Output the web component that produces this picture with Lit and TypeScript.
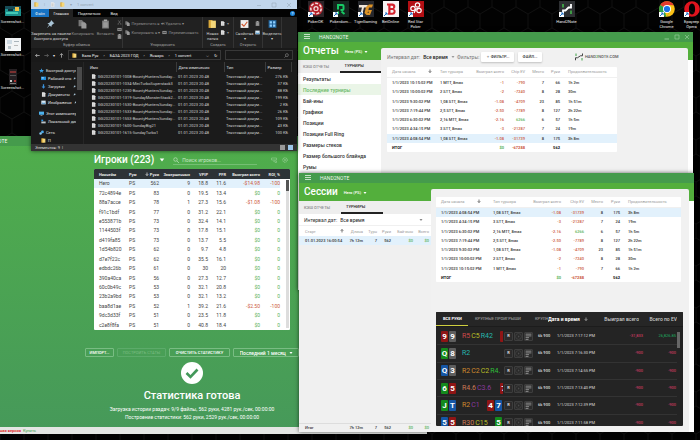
import { LitElement, html, css, svg, nothing, TemplateResult } from "lit";
import { customElement } from "lit/decorators.js";
import { classMap } from "lit/directives/class-map.js";

type Column = { label: string; width?: number; align?: "r" | "l"; sort?: "up" | "down" };

const arrow = (dir: "up" | "down") => html`<svg class="sort" viewBox="0 0 8 8" aria-hidden="true">
  <path d=${dir === "down" ? "M4 1v6M1.5 4.5L4 7l2.5-2.5" : "M4 7V1M1.5 3.5L4 1l2.5 2.5"} fill="none" stroke="currentColor" stroke-width="1.3" /></svg>`;

const tone = (value: string, index: number, money: number[]) => {
  if (!money.includes(index)) return "";
  return value.startsWith("-") ? "neg" : "pos";
};

function dataTable(name: string, cols: Column[], rows: string[][], money: number[], active = -1, total?: string[]): TemplateResult {
  const side = (i: number) => (cols[i].align === "r" ? "r" : "l");
  return html`<table class=${name}>
    <colgroup>${cols.map((c) => html`<col style=${c.width ? `width:${c.width}px` : ""} />`)}</colgroup>
    <thead><tr>${cols.map((c, i) => html`<th scope="col" class="${side(i)} ${c.sort ? "sorted" : ""}">${c.label}${c.sort ? arrow(c.sort) : nothing}</th>`)}</tr></thead>
    <tbody>${rows.map((r, n) => html`<tr class=${classMap({ active: n === active })}>
      ${r.map((v, i) => html`<td class="${side(i)} ${tone(v, i, money)}">${v}</td>`)}</tr>`)}</tbody>
    ${total ? html`<tfoot><tr>${total.map((v, i) => html`<td class="${side(i)} ${v ? tone(v, i, money) : ""}">${v}</td>`)}</tr></tfoot>` : nothing}
  </table>`;
}

const players = [
  ["Hero", "PS", "562", "9", "18.8", "11.6", "-$14.98", "-100"],
  ["72c4894e", "PS", "83", "0", "19.5", "13.4", "$0", "0"],
  ["88a7acce", "PS", "78", "1", "27.3", "15.6", "-$1.08", "-100"],
  ["f91c1bdf", "PS", "77", "0", "31.2", "22.1", "$0", "0"],
  ["e553871b", "PS", "73", "0", "32.4", "14.1", "$0", "0"],
  ["1144503f", "PS", "73", "0", "17.8", "15.1", "$0", "0"],
  ["d419fa85", "PS", "73", "0", "13.7", "5.5", "$0", "0"],
  ["1d54b820", "PS", "62", "0", "9.7", "4.8", "$0", "0"],
  ["d7e7f22c", "PS", "62", "0", "35.5", "16.1", "$0", "0"],
  ["edbdc26b", "PS", "61", "0", "30", "20", "$0", "0"],
  ["390a40ca", "PS", "56", "0", "27.3", "12.7", "$0", "0"],
  ["60c0b49c", "PS", "53", "0", "32.1", "20.8", "$0", "0"],
  ["23b2a9bd", "PS", "53", "0", "32.1", "13.2", "$0", "0"],
  ["baa8d1ae", "PS", "52", "1", "39.2", "21.6", "-$2.50", "-100"],
  ["9dc3d33f", "PS", "51", "0", "23.5", "11.8", "$0", "0"],
  ["c2e8f8fa", "PS", "51", "0", "40.8", "18.4", "$0", "0"],
];

const tournaments = [
  ["1/1/2023 10:15:02 PM", "1 MTT, 8max", "-1", "-790", "7", "66", "1h 2m"],
  ["1/1/2023 10:00:02 PM", "2 STT, 8max", "-2", "-7240", "8", "28", "30m"],
  ["1/1/2023 9:30:02 PM", "1,08 STT, 8max", "-1.08", "-4709", "23", "85", "1h 51m"],
  ["1/1/2023 7:19:44 PM", "2,5 STT, 8max", "-2.50", "-7789", "8", "127", "2h 22m"],
  ["1/1/2023 6:30:02 PM", "2,16 MTT, 8max", "-2.16", "6266", "6", "57", "1h 5m"],
  ["1/1/2023 4:34:15 PM", "3 STT, 8max", "-3", "-21287", "7", "24", "19m"],
  ["1/1/2023 4:08:54 PM", "1,08 STT, 8max", "-1.08", "-31739", "8", "175", "3h 8m"],
];
const tournamentTotal = ["ИТОГ", "", "$0", "-67288", "", "562", ""];

const tournamentCols = (w: number[]): Column[] => [
  { label: "Дата начала", width: w[0], sort: "down" },
  { label: "Тип турнира", width: w[1] },
  { label: "Выиграл всего", width: w[2], align: "r" },
  { label: "Chip EV", width: w[3], align: "r" },
  { label: "Место", width: w[4], align: "r" },
  { label: "Руки", width: w[5], align: "r" },
  { label: "Продолжительность" },
];

const files: [string, string][] = [
  ["GG20230101-1008-BountyHuntersSunday...", "276 КБ"],
  ["GG20230101-1034-MiniTurboSuperstack3", "37 КБ"],
  ["GG20230101-1230-BountyHuntersSunday...", "88 КБ"],
  ["GG20230101-1319-SundayMonsterStack2...", "199 КБ"],
  ["GG20230101-1530-BountyHuntersSunday...", "2 КБ"],
  ["GG20230101-1533-BountyHuntersSunday...", "26 КБ"],
  ["GG20230101-1553-BountyHuntersSunday...", "109 КБ"],
  ["GG20230101-1600-SundayBig21", "43 КБ"],
  ["GG20230101-1615-SundayTurbo1", "100 КБ"],
];

type Card = [string, "r" | "k" | "g" | "b"];
type Hand = { hole: Card[]; line: [string, string][]; board?: Card[]; clip?: boolean; at: string; won: string; ev: string };
const hands: Hand[] = [
  { hole: [["9", "r"], ["9", "k"]], line: [["R5", "c1"], ["C5", "c2"], ["R42", "c3"]], board: [["", "r"]], clip: true, at: "1/1/2023 7:17:12 PM", won: "-31,833", ev: "26,826.85" },
  { hole: [["Q", "g"], ["8", "k"]], line: [["R2", "c3"]], at: "1/1/2023 7:16:30 PM", won: "-900", ev: "-900" },
  { hole: [["Q", "b"], ["3", "k"]], line: [["R2", "c4"], ["C2", "c4"], ["C2", "c2"], ["R4.", "c5"]], at: "1/1/2023 7:14:55 PM", won: "-900", ev: "-900" },
  { hole: [["6", "g"], ["5", "r"]], line: [["R4.6", "c6"], ["C3.6", "c7"]], board: [["7", "r"]], clip: true, at: "1/1/2023 7:13:40 PM", won: "-900", ev: "-900" },
  { hole: [["J", "g"], ["T", "b"]], line: [["R2", "c4"], ["C1", "c7"]], board: [["4", "r"], ["7", "b"]], at: "1/1/2023 7:12:39 PM", won: "-900", ev: "-900" },
  { hole: [["5", "b"], ["5", "r"]], line: [["R30", "c6"], ["C15", "c2"]], board: [["5", "g"]], at: "1/1/2023 7:11:58 PM", won: "-900", ev: "-900" },
];

const shortcut = svg`<path d="M0 11h5v5H0z" fill="#fff"/><path d="M1 15l3-3M2 12h2v2" stroke="#1d6fc4" stroke-width="1" fill="none"/>`;
const logos: Record<string, TemplateResult> = {
  ok: svg`<rect width="16" height="16" fill="#2b2327"/><circle cx="8" cy="7.500" r="7" fill="#b5222b"/><circle cx="8" cy="7.500" r="5.200" fill="none" stroke="#f3dcdc" stroke-width="1.600" stroke-dasharray="3 1.600"/><circle cx="8" cy="7.500" r="2.600" fill="#f3dcdc"/><path d="M8 5.800L9.600 8 8 9.400 6.400 8z" fill="#a81c25"/>`,
  dom: svg`<rect width="16" height="16" fill="#15271f"/><path d="M5 8.500V4h4.500a1 1 0 011 1v3a1 1 0 01-1 1H7.500" fill="none" stroke="#17c964" stroke-width="2"/><path d="M5 10.500V13M8.500 10.500l3 2.500" stroke="#17c964" stroke-width="2"/>`,
  tiger: svg`<rect width="16" height="16" fill="#26272c"/><path d="M1 4h9L8.500 6.500H6L4 14H2l2-7.500H1z" fill="#f0e7da"/><path d="M15 3.500h-4L8 6l-1.500 6 2 2H12l2-5h-3.500l-.6 1.800h1l-.5 1.200H9.600L11 6.500h3z" fill="#dc9327"/>`,
  bet: svg`<rect width="16" height="16" fill="#f7f3f3"/><path fill-rule="evenodd" d="M4 2.500h5.500a3 3 0 011.700 5.400 3.200 3.200 0 01-1.700 5.900H4v-2h1.300V4.500H4zM7.500 4.700v2.400H9a1.200 1.200 0 000-2.400zm0 4.300v2.700H9.300a1.350 1.350 0 000-2.700z" fill="#d5232e"/>`,
  star: svg`<rect width="16" height="16" fill="#b30f14"/><circle cx="9.500" cy="4" r="2.200" fill="none" stroke="#fff" stroke-width="1.200"/><circle cx="5" cy="7.500" r="2.200" fill="none" stroke="#fff" stroke-width="1.200"/><circle cx="11" cy="9.500" r="2.200" fill="none" stroke="#fff" stroke-width="1.200"/><path d="M6 12l2-4 4-1" stroke="#fff" stroke-width="1.200" fill="none"/>`,
  h2n: svg`<rect width="16" height="16" fill="#2e3033"/><path d="M4 13V9.500h2.500L9.500 6.500H12V3" fill="none" stroke="#fff" stroke-width="1.800"/><path d="M4 3v3.500M12 9.500V13" stroke="#41a747" stroke-width="1.800"/>`,
  chrome: svg`<circle cx="8" cy="8" r="7.800" fill="#fbc116"/><path d="M8 8L1.200 4.100A7.800 7.800 0 0114.800 4.200L8 4.200z" fill="#e33b2e"/><path d="M8 8L1.200 4.100A7.800 7.800 0 007.500 15.800L11.300 9.900z" fill="#2ba24c"/><path d="M8 4.200h6.800A7.800 7.800 0 007.500 15.800L11.300 9.900z" fill="#fbc116"/><circle cx="8" cy="8" r="4" fill="#fff"/><circle cx="8" cy="8" r="3.100" fill="#1a73e8"/>`,
  opera: svg`<path fill-rule="evenodd" d="M8 .2a7.800 7.800 0 100 15.600A7.800 7.800 0 008 .2zm0 2.300c1.900 0 3.100 2.400 3.100 5.500S9.900 13.500 8 13.500 4.900 11.100 4.900 8 6.100 2.500 8 2.500z" fill="#e0141e"/>`,
  shotA: svg`<rect y="3" width="16" height="10" fill="#1c8f8c"/><rect y="3" width="16" height="3" fill="#174b57"/><rect x="10" y="4" width="4" height="4" fill="#f0c04a"/><rect x="1" y="9" width="12" height="2" fill="#43c9b5"/><rect x="3" y="6" width="5" height="2" fill="#0d3038"/>`,
  shotB: svg`<rect y="2" width="16" height="13" fill="#f2f4f6"/><rect x="2" y="4" width="5" height="4" fill="#cfdbe4"/><rect x="9" y="5" width="5" height="1" fill="#aab4bb"/><rect x="3" y="10" width="3" height="3" fill="#b7c3ca"/><rect x="9" y="9" width="4" height="1" fill="#bbb"/>`,
  shotC: svg`<rect x="4" width="8" height="16" fill="#241f22"/><rect x="5" y="2" width="6" height="2" fill="#7a3030"/><rect x="5" y="6" width="6" height="1" fill="#555"/><rect x="5" y="11" width="2" height="2" fill="#c9c9c9"/><rect x="9" y="11" width="2" height="2" fill="#a33"/><rect x="5" y="14" width="6" height="1" fill="#777"/>`,
};

const deskIcon = (logo: string, label: string, link = true) => html`<button class="desk-icon">
  <svg viewBox="0 0 16 16" aria-hidden="true">${logos[logo]}${link ? shortcut : nothing}</svg><span>${label}</span></button>`;

const caret = html`<svg class="caret" viewBox="0 0 8 8" aria-hidden="true"><path d="M1 2h6L4 6z" fill="currentColor" /></svg>`;
const wave = html`<svg class="wave" viewBox="0 0 16 16" aria-hidden="true"><path d="M1 14.500V9.500h4l6-4h4V1" fill="none" stroke="#444" stroke-width="2" /><path d="M2 1v5M14 10v5" stroke="#3fa046" stroke-width="2" /></svg>`;

const ribbonIcons: Record<string, TemplateResult> = {
  pin: svg`<path d="M9 1l6 6-2 .5-3 3-.5 3-3-3-5 5 4-6-3-3 3-.5 3-3z" fill="#a9c4d6"/>`,
  copy: svg`<path d="M1 1h6l3 3v8H1z" fill="#777"/><path d="M6 5h6l3 3v8H6z" fill="#999"/>`,
  paste: svg`<path d="M2 2h12v14H2z" fill="#7d7d7d"/><path d="M4 5h8v9H4z" fill="#999"/><path d="M5 0h6v3H5z" fill="#aaa"/>`,
  cut: svg`<path d="M4 1l7 10M12 1L5 11" stroke="#8a8a8a" stroke-width="1.500"/><circle cx="4" cy="13" r="2" fill="none" stroke="#8a8a8a"/><circle cx="12" cy="13" r="2" fill="none" stroke="#8a8a8a"/>`,
  path: svg`<path d="M1 3h14v10H1z" fill="#8a8a8a"/><path d="M3 8h10" stroke="#333" stroke-width="2"/>`,
  folder: svg`<path d="M1 1h7v14H1z" fill="#d9a83a"/><path d="M5 2h9v13H5z" fill="#f5d77a"/>`,
  props: svg`<path d="M1 1h14v14H1z" fill="#eee"/><path d="M3 8l4 4 6-8" stroke="#d0552b" stroke-width="2" fill="none"/>`,
  select: svg`<path d="M1 1h14v14H1z" fill="#1f5f96"/><path d="M3 3h4v4H3zM9 3h4v4H9zM3 9h4v4H3zM9 9h4v4H9z" fill="#8fd0ff"/>`,
  page: svg`<path d="M3 1h8l3 3v11H3z" fill="#e8e8e8"/><path d="M5 6h6M5 9h6M5 12h6" stroke="#999"/>`,
  star: svg`<path d="M8 1l2 5 6 .5-4.500 3.500L13 15l-5-3-5 3 1.500-5L0 6.500 6 6z" fill="#3ba0e8"/>`,
  desk: svg`<path d="M0 2h16v11H0z" fill="#1f8ee0"/><path d="M2 4h7v4H2z" fill="#9ad4ff"/>`,
  down: svg`<path d="M6 1h4v7h4l-6 7-6-7h4z" fill="#3b93dc"/>`,
  pic: svg`<path d="M1 2h14v12H1z" fill="#d6e8f5"/><path d="M2 12l4-5 3 3 2-2 4 4z" fill="#3e8bc4"/>`,
  pc: svg`<path d="M0 2h16v10H0z" fill="#4db2ec"/><path d="M5 13h6v2H5z" fill="#bbb"/>`,
  disk: svg`<path d="M1 8h14v6H1z" fill="#bcc4ca"/><path d="M1 2h6v5H1z" fill="#2f9be6"/>`,
  net: svg`<circle cx="11" cy="6" r="4.500" fill="#4aa9ea"/><circle cx="5" cy="11" r="4" fill="#85c8f2"/>`,
  back: svg`<path d="M15 8H2M7 3L2 8l5 5" fill="none" stroke="#ddd" stroke-width="2"/>`,
  fwd: svg`<path d="M1 8h13M9 3l5 5-5 5" fill="none" stroke="#777" stroke-width="2"/>`,
  up: svg`<path d="M8 15V2M3 7l5-5 5 5" fill="none" stroke="#ddd" stroke-width="2"/>`,
};
const glyph = (name: string, size = "") => html`<svg class="glyph ${size}" viewBox="0 0 16 16" aria-hidden="true">${ribbonIcons[name]}</svg>`;

@customElement("app-root")
export class AppRoot extends LitElement {
  static styles = css`
    :host { display: block; font-family: Roboto, "Liberation Sans", sans-serif; font-size: 5px; line-height: 6px; color: #333; }
    * { box-sizing: border-box; }
    button, input, select { font: inherit; color: inherit; background: none; border: 0; padding: 0; margin: 0; appearance: none; text-align: left; outline: 0; border-radius: 0; }
    h1, h2, p, ul { margin: 0; padding: 0; font-weight: 400; list-style: none; }
    a { color: inherit; text-decoration: none; }
    table { border-collapse: collapse; table-layout: fixed; width: 100%; }
    th, td { padding: 0; white-space: nowrap; font-weight: 400; vertical-align: middle; text-align: left; line-height: 5px; }
    .r { text-align: right; }
    .sort { width: 4px; height: 4px; color: #333; }
    .caret { width: 4px; height: 4px; flex: none; }
    .neg { color: #cc5a3c; }
    .pos { color: #5cb35a; }
    .desktop { position: relative; min-height: 100vh; overflow: hidden; background: #020202; }
    .wallpaper { position: absolute; width: 100%; height: 100%; }
    .icons { position: absolute; display: flex; top: 1px; }
    .icons.main { left: 303px; }
    .icons.note { left: 554px; }
    .icons.web { left: 654px; }
    .icons.shots { left: 0; top: 3px; flex-direction: column; gap: 9px; }
    .desk-icon { width: 25px; height: 24px; display: flex; flex-direction: column; align-items: center; gap: 2px; color: #eee; font-size: 4px; line-height: 5px; }
    .shots .desk-icon { gap: 0; }
    .desk-icon svg { width: 16px; height: 16px; flex: none; }
    .desk-icon span { text-align: center; }
    .win { position: absolute; display: flex; flex-direction: column; overflow: hidden; box-shadow: 0 0 4px rgba(0, 0, 0, 0.6); }
    .titlebar { flex: none; height: 10px; display: flex; align-items: center; gap: 9px; padding: 0 3px 0 6px; background: #459b4c; color: #eef8ee; }
    .titlebar svg { width: 6px; height: 6px; }
    .titlebar .controls { margin-left: auto; display: flex; gap: 4px; color: #8fc893; }
    .titlebar .controls svg { display: block; }

    /* players */
    .players { left: -43px; top: 136px; width: 470px; height: 298px; background: linear-gradient(#50ae4b, #46995a); }
    .players main { flex: 1; display: flex; flex-direction: column; align-items: center; color: #fff; padding-top: 7px; }
    .search { width: 196px; height: 16px; display: flex; align-items: center; padding-bottom: 2px; }
    .search h1 { font-size: 10px; line-height: 12px; font-weight: 500; margin-right: 5px; white-space: nowrap; }
    .search label { margin-left: 8px; width: 84px; height: 9px; display: flex; align-items: center; gap: 3px; border-bottom: 1px solid #74be73; color: #b9dfb8; }
    .search input { flex: 1; min-width: 0; }
    .search input::placeholder { color: #c7e6c6; opacity: 1; }
    .search svg { width: 6px; height: 6px; flex: none; }
    .search .tools { margin-left: auto; display: flex; gap: 5px; padding-right: 2px; color: #a3d5a0; }
    .list { width: 196px; background: #fff; color: #444; border-radius: 1px; position: relative; overflow: hidden; }
    .ptable { height: 161px; }
    .ptable thead tr { height: 10px; background: #2d3337; color: #e6e6e6; font-size: 4px; }
    .ptable th { font-weight: 700; }
    .ptable th .sort { color: #fff; margin-right: 1px; }
    .ptable th.sorted.r { display: flex; flex-direction: row-reverse; align-items: center; justify-content: flex-start; height: 10px; }
    .ptable th:first-child, .ptable td:first-child { padding-left: 5px; }
    .ptable .active, .ctable .active, .stable .active { background: #e2f1fc; }
    .thumb { position: absolute; right: 1px; top: 11px; width: 3px; height: 148px; background: #ddd; }
    .thumb i { display: block; height: 11px; background: #555; }
    .actions { margin-top: 18px; display: flex; gap: 3px; font-size: 4px; height: 9px; }
    .actions button, .actions .pick { border: 1px solid #79bd83; border-radius: 1px; display: flex; align-items: center; justify-content: center; }
    .actions button { width: 29px; font-weight: 500; }
    .actions .build { width: 49px; color: #7dbd84; border-color: #5cab6a; font-weight: 400; }
    .actions .clear { width: 61px; }
    .actions .pick { width: 66px; font-size: 5px; font-weight: 500; gap: 2px; }
    .check { width: 22px; height: 22px; margin-top: 5px; flex: none; }
    .players h2 { font-size: 11px; line-height: 12px; font-weight: 500; margin-top: 6px; }
    .players p { line-height: 6px; margin-top: 4px; }
    .players p + p { margin-top: 2px; }
    .players footer { height: 7px; background: #e4e6e4; display: flex; align-items: center; gap: 2px; padding-left: 43px; font-size: 4px; color: #e03030; font-weight: 700; }
    .players footer a { color: #43a047; font-weight: 400; }

    /* explorer */
    .explorer { left: 31px; top: 0; width: 266px; height: 151px; background: #1b1b1b; color: #e2e2e2; font-size: 4px; line-height: 5px; }
    .glyph { width: 5px; height: 5px; flex: none; }
    .glyph.big { width: 9px; height: 10px; }
    .glyph.tiny { width: 3px; height: 3px; }
    .ex-title { height: 9px; background: #c0d5ec; color: #93a2b2; display: flex; align-items: center; gap: 5px; padding: 0 5px 0 3px; }
    .ex-title .controls { margin-left: auto; display: flex; gap: 9px; }
    .ex-title .controls svg { width: 6px; height: 6px; display: block; }
    .ex-tabs { height: 8px; background: #030303; display: flex; align-items: center; }
    .ex-tabs button { height: 8px; text-align: center; padding: 0 5px; color: #eee; }
    .ex-tabs .file { background: #1673c4; width: 18px; padding: 0; }
    .ex-tabs .on { background: #222; width: 24px; padding: 0; }
    .ex-tabs .help { margin-left: auto; margin-right: 2px; width: 5px; height: 5px; border-radius: 50%; background: #1c86dc; padding: 0; color: #fff; line-height: 5px; }
    .ribbon { height: 31px; background: #212121; display: flex; }
    .group { display: flex; flex-direction: column; border-right: 1px solid #343434; padding-top: 2px; }
    .group .row { flex: 1; display: flex; justify-content: center; gap: 2px; }
    .group small { font-size: 4px; line-height: 6px; color: #a5a5a5; text-align: center; }
    .group button { display: flex; flex-direction: column; align-items: center; text-align: center; gap: 2px; line-height: 5px; color: #d0d0d0; white-space: nowrap; }
    .group .mini { flex-direction: row; height: 9px; gap: 2px; color: #8f8f8f; }
    .clip { width: 92px; }
    .clip .row { gap: 1px; }
    .clip button { width: 22px; color: #8f8f8f; }
    .clip button:first-child { width: 40px; color: #ddd; }
    .clip .cut { display: flex; flex-direction: column; gap: 2px; padding-top: 1px; }
    .org { width: 80px; }
    .org .col { width: 35px; }
    .org .col + .col { width: 39px; }
    .make { width: 31px; }
    .open { width: 29px; }
    .sel { width: 19px; }
    .address { height: 14px; background: #191919; display: flex; align-items: center; gap: 4px; padding: 0 4px; }
    .crumbs { flex: 1; height: 10px; border: 1px solid #383838; display: flex; align-items: center; gap: 5px; padding: 0 3px; color: #eee; white-space: nowrap; }
    .crumbs .end { margin-left: auto; }
    .find { width: 68px; height: 10px; border: 1px solid #383838; display: flex; align-items: center; padding: 0 3px; }
    .find input { flex: 1; min-width: 0; }
    .find svg { width: 5px; height: 5px; }
    .ex-body { flex: 1; display: flex; min-height: 0; overflow: hidden; }
    .tree { width: 45px; padding: 4px 0 0 8px; overflow: hidden; }
    .tree li { height: 8px; display: flex; align-items: center; gap: 2px; padding-left: 2px; white-space: nowrap; }
    .tree .top { padding-left: 0; }
    .tree .gap { margin-top: 3px; }
    .tree .tiny { margin-left: auto; }
    .ex-scroll { width: 7px; padding: 5px 1px; }
    .ex-scroll i { display: block; height: 23px; background: #4a4a4a; }
    .files { flex: 1; border-left: 1px solid #262626; }
    .files td { height: 7px; color: #cfcfcf; overflow: hidden; }
    .files th { height: 10px; border-right: 1px solid #3b3b3b; padding-left: 2px; }
    .files td { padding-left: 2px; }
    .files th:first-child { padding-left: 6px; }
    .files td:first-child .cell { display: flex; gap: 2px; align-items: center; padding-left: 5px; }
    .files td.r { padding-right: 3px; }
    .files tbody::before { content: ""; display: block; height: 1px; }
    .ex-status { height: 7px; background: #333; padding: 1px 4px; color: #ddd; display: flex; justify-content: space-between; }
    .ex-status span:last-child { width: 13px; height: 5px; background: linear-gradient(90deg, #999 5px, #333 5px, #333 8px, #9cc6e8 8px); }

    /* reports and sessions */
    .reports { left: 298px; right: 7px; top: 32px; height: 258px; background: #fff; }
    .sessions { left: 299px; right: 6px; top: 173px; height: 259px; background: #fff; }
    .body { flex: 1; display: flex; min-height: 0; background: linear-gradient(#53af3c 0 18px, #fff 18px); }
    .side { display: flex; flex-direction: column; }
    .reports .side { width: 83px; }
    .sessions .side { width: 132px; background: linear-gradient(transparent 0 18px, #f0f0f0 18px); }
    .heading { height: 18px; display: flex; align-items: center; gap: 6px; padding-left: 5px; color: #fff; }
    .heading h1 { font-size: 10px; line-height: 12px; font-weight: 500; }
    .heading button { display: flex; align-items: center; gap: 2px; font-size: 4px; font-weight: 500; padding-top: 2px; }
    .tabs { height: 13px; background: #eee; display: flex; font-size: 4px; font-weight: 500; }
    .tabs button { width: 42px; padding-left: 5px; color: #888; }
    .tabs .on { color: #222; border-bottom: 2px solid #222; }
    .menu a { display: flex; align-items: center; height: 11px; padding-left: 5px; font-weight: 500; color: #333; }
    .menu .on { background: #eaf5e7; color: #69b765; }
    .panel { flex: 1; min-width: 0; background: #f1f1f1; margin: 6px 5px 0 0; border-radius: 2px 2px 0 0; }
    .reports .panel { padding: 4px 0 0 6px; }
    .sessions .panel { padding: 8px 6px 5px 5px; display: flex; flex-direction: column; }
    .filters { display: flex; align-items: center; height: 10px; color: #777; }
    .filters label, .range { display: flex; align-items: center; gap: 3px; }
    .filters label { width: 70px; }
    .filters select, .range select { color: #222; font-weight: 500; }
    .filters label .caret { color: #999; }
    .filters .name { width: 24px; }
    .filters button { height: 10px; background: #fff; border-radius: 1px; box-shadow: 0 1px 2px rgba(0, 0, 0, 0.2); text-align: center; color: #333; font-size: 4px; font-weight: 500; width: 33px; margin-right: 4px; }
    .filters .file { width: 24px; margin-right: 33px; }
    .filters a { display: flex; align-items: center; gap: 2px; font-size: 4px; color: #555; font-weight: 500; }
    .filters a b { color: #43a047; font-weight: 500; }
    .wave { width: 8px; height: 8px; }
    .card { background: #fff; border-radius: 1px; }
    .reports .card { width: 230px; margin-top: 5px; }
    .sessions .card { margin-right: 2px; }
    .ctable { height: 85px; color: #333; font-size: 4px; }
    .ctable td { font-weight: 500; }
    .ctable thead tr { height: 10px; color: #999; border-bottom: 1px solid #f0f0f0; }
    .ctable tfoot tr { height: 9px; }
    .ctable tfoot td { font-weight: 700; }
    .ctable tfoot td:not(.neg):not(.pos) { color: #111; }
    .ctable th:first-child, .ctable td:first-child { padding-left: 5px; }
    .ctable th:last-child, .ctable td:last-child { padding-left: 8px; }
    .ctable .sort { margin-left: 12px; }
    .range { height: 11px; background: #fff; padding: 0 8px 0 5px; margin-bottom: 1px; }
    .range select { flex: 1; font-weight: 400; }
    .range .caret { color: #888; }
    .stable { font-size: 4px; color: #333; }
    .stable td { height: 9px; font-weight: 500; }
    .stable thead tr { height: 10px; background: #fff; color: #999; }
    .stable th:first-child, .stable td:first-child { padding-left: 6px; }
    .stable .sort { margin-left: 24px; }
    .stable th:last-child, .stable td:last-child { padding-right: 2px; }
    .sum { margin-top: auto; border-top: 1px solid #ddd; }
    .hands { flex: none; margin-top: 30px; height: 114px; background: #242424; color: #ddd; border-radius: 1px; overflow: hidden; position: relative; }
    .hands .bar { height: 15px; display: flex; align-items: stretch; background: #262626; border-bottom: 1px solid #1c1c1c; white-space: nowrap; font-size: 4px; }
    .bar button { color: #999; font-weight: 500; padding-left: 7px; overflow: hidden; }
    .bar .all { width: 32px; color: #fff; border-bottom: 1px solid #cfcf3f; font-weight: 700; }
    .bar .loss { width: 60px; }
    .bar .cut { width: 20px; }
    .bar .when { width: 43px; padding: 0; font-size: 5px; font-weight: 700; color: #fff; }
    .bar .won, .bar .ev { font-size: 5px; color: #ccc; text-align: right; padding: 0; width: 48px; }
    .bar .ev { width: 38px; }
    .bar .sort { color: #ccc; margin-left: 4px; }
    .deals { height: 105px; display: grid; grid-auto-rows: 1fr; padding: 1px 6px 0 1px; }
    .deal { display: flex; align-items: center; border-bottom: 1px solid #333; padding-left: 4px; font-size: 4px; }
    .pc { display: inline-block; width: 7px; height: 11px; border-radius: 1px; color: #fff; font-weight: 700; font-size: 8px; line-height: 11px; text-align: center; margin-right: 1px; overflow: hidden; }
    .pc.r { background: #8f1515; text-align: center; }
    .pc.k { background: #5e5e5e; }
    .pc.g { background: #148a1c; }
    .pc.b { background: #1556a5; }
    .line { width: 41px; height: 11px; margin-left: 5px; display: flex; gap: 1px; align-items: center; overflow: hidden; font-size: 7px; white-space: nowrap; }
    .line .board { margin-left: auto; display: flex; flex: none; }
    .line .board.clip { width: 3px; overflow: hidden; }
    .board .pc { flex: none; }
    .board.clip .pc { margin: 0; }
    .c1 { color: #cf4a4a; } .c2 { color: #b9bf27; } .c3 { color: #24b6ad; } .c4 { color: #cf8a2e; } .c5 { color: #2fbf3a; } .c6 { color: #cc7a55; } .c7 { color: #8a3a9e; }
    .deal button { width: 9px; height: 9px; margin-left: 1px; border-radius: 1px; background: #2b2b2b; border: 1px solid #3d3d3d; text-align: center; font-weight: 700; line-height: 6px; display: flex; align-items: center; justify-content: center; }
    .deal button svg { width: 7px; height: 7px; flex: none; }
    .deal .stack { width: 19px; margin-left: 5px; font-weight: 500; }
    .deal .at { width: 48px; }
    .deal .won, .deal .ev { text-align: right; color: #e0406e; width: 38px; }
    .deal .ev { width: 33px; }
    .deal .ev.up { color: #1fae62; }
    .hscroll { position: absolute; right: 3px; top: 20px; width: 3px; height: 16px; background: #666; }
  `;

  private titlebar(controls: boolean) {
    return html`<header class="titlebar">
      <svg viewBox="0 0 6 6" aria-hidden="true"><path d="M0 0h6v1H0zM0 2h6v1H0zM0 4h6v1H0z" fill="#c4e2c5" /></svg>
      <span>HAND2NOTE</span>
      ${controls ? html`<div class="controls">
        <button aria-label="Свернуть"><svg viewBox="0 0 12 12"><path d="M1 10h9" stroke="currentColor" stroke-width="2" /></svg></button>
        <button aria-label="Развернуть"><svg viewBox="0 0 12 12"><path d="M2 2h8v8H2z" fill="none" stroke="currentColor" stroke-width="1.500" /></svg></button>
        <button aria-label="Закрыть"><svg viewBox="0 0 12 12"><path d="M2 2l8 8M10 2l-8 8" stroke="currentColor" stroke-width="1.500" /></svg></button>
      </div>` : nothing}
    </header>`;
  }

  private explorer() {
    return html`<section class="win explorer">
      <div class="ex-title">${glyph("folder")}<span>|</span>${glyph("page")}${glyph("folder")}<span>▾</span><span>1 convert</span>
        <div class="controls">
          <button aria-label="Свернуть"><svg viewBox="0 0 12 12"><path d="M2 7h8" stroke="currentColor" /></svg></button>
          <button aria-label="Развернуть"><svg viewBox="0 0 12 12"><path d="M2 2h8v8H2z" fill="none" stroke="currentColor" /></svg></button>
          <button aria-label="Закрыть"><svg viewBox="0 0 12 12"><path d="M2 2l8 8M10 2l-8 8" stroke="currentColor" /></svg></button>
        </div></div>
      <nav class="ex-tabs"><button class="file">Файл</button><button class="on">Главная</button><button>Поделиться</button><button>Вид</button><button class="help" aria-label="Справка">?</button></nav>
      <div class="ribbon">
        <div class="group clip"><div class="row">
          <button>${glyph("pin", "big")}<span>Закрепить на панели<br />быстрого доступа</span></button>
          <button>${glyph("copy", "big")}<span>Копировать</span></button>
          <button>${glyph("paste", "big")}<span>Вставить</span></button>
          <div class="cut">${glyph("cut")}${glyph("path")}${glyph("paste")}</div></div><small>Буфер обмена</small></div>
        <div class="group org"><div class="row">
          <div class="col"><button class="mini">${glyph("copy")}Переместить в ▾</button><button class="mini">${glyph("copy")}Копировать в ▾</button></div>
          <div class="col"><button class="mini">✕ Удалить ▾</button><button class="mini">${glyph("path")}Переименовать</button></div></div><small>Упорядочить</small></div>
        <div class="group make"><div class="row"><button>${glyph("folder", "big")}<span>Новая<br />папка</span></button>
          <div><button class="mini">${glyph("page")}▾</button><button class="mini">${glyph("page")}▾</button></div></div><small>Создать</small></div>
        <div class="group open"><div class="row"><button>${glyph("props", "big")}<span>Свойства<br />▾</span></button>
          <div><button class="mini">${glyph("paste")}</button><button class="mini">${glyph("pic")}</button></div></div><small>Открыть</small></div>
        <div class="group sel"><div class="row"><button>${glyph("select", "big")}<span>Выделить<br />▾</span></button></div></div>
      </div>
      <div class="address">${glyph("back")}${glyph("fwd")}<span>▾</span>${glyph("up")}
        <div class="crumbs">${glyph("folder")}<span>База Рук</span><span>›</span><span>БАЗА 2023 ГОД</span><span>›</span><span>Январь</span><span>›</span><span>1 convert</span><span class="end">⌵</span><span>↻</span></div>
        <label class="find"><input aria-label="Поиск" /><svg viewBox="0 0 12 12"><circle cx="7" cy="5" r="3.500" fill="none" stroke="#bbb" /><path d="M4.500 7.500L1 11" stroke="#bbb" /></svg></label></div>
      <div class="ex-body">
        <ul class="tree">
          <li class="top">${glyph("star")}Быстрый доступ</li><li>${glyph("desk")}Рабочий сто${glyph("pin", "tiny")}</li><li>${glyph("down")}Загрузки${glyph("pin", "tiny")}</li><li>${glyph("page")}Документы${glyph("pin", "tiny")}</li><li>${glyph("pic")}Изображени${glyph("pin", "tiny")}</li>
          <li class="top gap">${glyph("pc")}Этот компьютер</li><li>${glyph("disk")}Локальный дис</li><li class="top gap">${glyph("net")}Сеть</li><li>${glyph("folder")}П</li></ul>
        <div class="ex-scroll"><i></i></div>
        <div class="files"><table>
          <colgroup><col style="width:92px" /><col style="width:48px" /><col style="width:41px" /><col style="width:26px" /><col /></colgroup>
          <thead><tr><th scope="col">Имя</th><th scope="col">Дата изменения</th><th scope="col">Тип</th><th scope="col">Размер</th><td></td></tr></thead>
          <tbody>${files.map(([n, s]) => html`<tr><td><div class="cell">${glyph("page")}${n}</div></td><td>01.01.2023 20:48</td><td>Текстовый докум...</td><td class="r">${s}</td><td></td></tr>`)}</tbody>
        </table></div>
      </div>
      <div class="ex-status"><span>Элементов: 9 &nbsp;|</span><span></span></div>
    </section>`;
  }

  private playersWindow() {
    return html`<section class="win players">${this.titlebar(false)}
      <main>
        <div class="search"><h1>Игроки (223)</h1>${caret}
          <label><svg viewBox="0 0 12 12"><circle cx="5" cy="5" r="3.500" fill="none" stroke="currentColor" stroke-width="1.500" /><path d="M8 8l4 4" stroke="currentColor" stroke-width="1.500" /></svg><input placeholder="Поиск игроков..." aria-label="Поиск игроков" /></label>
          <div class="tools"><button aria-label="Метки"><svg viewBox="0 0 12 12"><path d="M1 2h10v4H1zM5 8h6v3H8z" fill="none" stroke="currentColor" /></svg></button>
          <button aria-label="Настройки"><svg viewBox="0 0 12 12"><circle cx="6" cy="6" r="4.500" fill="none" stroke="currentColor" stroke-width="1.800" stroke-dasharray="2 1" /><circle cx="6" cy="6" r="1.500" fill="none" stroke="currentColor" /></svg></button></div></div>
        <div class="list">
          ${dataTable("ptable", [{ label: "Никнейм", width: 35 }, { label: "Рум", width: 13 }, { label: "Руки", width: 17, align: "r", sort: "down" }, { label: "Завершенных", width: 31, align: "r" }, { label: "VPIP", width: 18, align: "r" }, { label: "PFR", width: 18, align: "r" }, { label: "Выиграл всего", width: 34, align: "r" }, { label: "ROI, %", width: 20, align: "r" }, { label: "" }], players, [6, 7], 0)}
          <div class="thumb"><i></i></div>
        </div>
        <div class="actions"><button>ИМПОРТ...</button><button class="build" disabled>ПОСТРОИТЬ СТАТЫ</button><button class="clear">ОЧИСТИТЬ СТАТИСТИКУ</button>
          <label class="pick"><select aria-label="Период"><option>Последний 1 месяц</option></select>${caret}</label></div>
        <svg class="check" viewBox="0 0 22 22" aria-hidden="true"><circle cx="11" cy="11" r="11" fill="#fff" /><path d="M5.500 11l4 4 7-7.500" fill="none" stroke="#43985a" stroke-width="2.600" /></svg>
        <h2>Статистика готова</h2>
        <p>Загрузка истории раздач: 9/9 файлы, 562 руки, 4281 рук./сек, 00:00:00</p>
        <p>Построение статистики: 562 руки, 2529 рук./сек, 00:00:00</p>
      </main>
      <footer><span>ная версия</span><a href="#buy">Купить</a></footer>
    </section>`;
  }

  private heading(text: string) {
    return html`<div class="heading"><h1>${text}</h1><button>Hero (PS)${caret}</button></div>
      <nav class="tabs"><button>КЭШ ОТЧЕТЫ</button><button class="on">ТУРНИРЫ</button></nav>`;
  }

  private reports() {
    const items = ["Результаты", "Последние турниры", "Бай-ины", "Графики", "Позиции", "Позиции Full Ring", "Размеры стеков", "Размер большого блайнда", "Румы"];
    return html`<section class="win reports">${this.titlebar(true)}
      <div class="body">
        <div class="side">${this.heading("Отчеты")}
          <nav class="menu">${items.map((t, i) => html`<a href="#r${i}" class=${classMap({ on: i === 1 })}>${t}</a>`)}</nav></div>
        <div class="panel">
          <div class="filters"><label>Интервал дат: <select><option>Все время</option></select>${caret}</label><span class="name">Фильтры:</span>
            <button>＋ ФИЛЬТР...</button><button class="file">ФАЙЛ...</button><a href="#site">${wave}<span>HAND<b>2</b>NOTE.COM</span></a></div>
          <div class="card">${dataTable("ctable", tournamentCols([53, 35, 29, 21, 19, 16]), tournaments, [2, 3], 6, tournamentTotal)}</div>
        </div>
      </div></section>`;
  }

  private sessions() {
    const cols: Column[] = [{ label: "Старт", width: 47, sort: "up" }, { label: "Длина", width: 17, align: "r" }, { label: "Турн", width: 14, align: "r" }, { label: "Руки", width: 14, align: "r" }, { label: "Бай-ины", width: 22, align: "r" }, { label: "Всего", align: "r" }];
    return html`<section class="win sessions">${this.titlebar(false)}
      <div class="body">
        <div class="side">${this.heading("Сессии")}
          <label class="range">Интервал дат: <select><option>Все время</option></select>${caret}</label>
          ${dataTable("stable", cols, [["01.01.2023 16:00:54", "7h 12m", "7", "562", "$0", "$0"]], [4, 5], 0)}
          <table class="stable sum"><colgroup>${cols.map((c) => html`<col style=${c.width ? `width:${c.width}px` : ""} />`)}</colgroup>
            <tbody><tr><td>Итог</td><td class="r">7h 12m</td><td class="r">7</td><td class="r">562</td><td class="r pos">$0</td><td class="r pos">$0</td></tr></tbody></table>
        </div>
        <div class="panel">
          <div class="card">${dataTable("ctable", tournamentCols([57, 36, 32, 23, 19, 17]), [...tournaments].reverse(), [2, 3], 0, tournamentTotal)}</div>
          <div class="hands">
            <div class="bar"><button class="all">ВСЕ РУКИ</button><button class="loss">КРУПНЫЕ ПРОИГРЫШИ</button><button class="cut">КРУПН</button><button class="when">Дата и время${arrow("down")}</button><button class="won">Выиграл всего</button><button class="ev">Всего по EV</button></div>
            <div class="deals">${hands.map((h) => html`<div class="deal">
              ${h.hole.map(([v, s]) => html`<span class="pc ${s}">${v}</span>`)}
              <div class="line">${h.line.map(([t, c]) => html`<span class=${c}>${t}</span>`)}${h.board ? html`<span class=${classMap({ board: true, clip: !!h.clip })}>${h.board.map(([v, s]) => html`<span class="pc ${s}">${v}</span>`)}</span>` : nothing}</div>
              <button>R</button>
              <button aria-label="Повтор"><svg viewBox="0 0 12 12"><circle cx="6" cy="6" r="5" fill="none" stroke="#4a4a4a" /><path d="M5 4l3 2-3 2z" fill="#4a4a4a" /></svg></button>
              <button aria-label="Заметка"><svg viewBox="0 0 12 12"><path d="M1 2h10M1 5h10M1 8h6M1 11h5" stroke="#999" stroke-width="1.500" /></svg></button>
              <span class="stack">6k 900</span><span class="at">${h.at}</span><span class="won">${h.won}</span><span class=${classMap({ ev: true, up: !h.ev.startsWith("-") })}>${h.ev}</span></div>`)}</div>
            <div class="hscroll"></div>
          </div>
        </div>
      </div></section>`;
  }

  render() {
    return html`<div class="desktop">
      <svg class="wallpaper" aria-hidden="true"><defs><pattern id="hex" width="24" height="42" patternUnits="userSpaceOnUse"><path d="M12 0v7l12 7v14l-12 7v7M12 7L0 14v14l12 7" fill="none" stroke="#101010" /></pattern></defs><rect width="100%" height="100%" fill="url(#hex)" /></svg>
      <div class="icons shots">${deskIcon("shotA", "Screenshot...", false)}${deskIcon("shotB", "Screenshot...", false)}${deskIcon("shotC", "Screenshot...", false)}</div>
      <div class="icons main">${deskIcon("ok", "PokerOK")}${deskIcon("dom", "Pokerdom...")}${deskIcon("tiger", "TigerGaming")}${deskIcon("bet", "BetOnline")}${deskIcon("star", "Red Star Poker")}</div>
      <div class="icons note">${deskIcon("h2n", "Hand2Note")}</div>
      <div class="icons web">${deskIcon("chrome", "Google Chrome")}${deskIcon("opera", "Браузер Opera")}</div>
      ${this.playersWindow()}${this.reports()}${this.explorer()}${this.sessions()}
    </div>`;
  }
}
